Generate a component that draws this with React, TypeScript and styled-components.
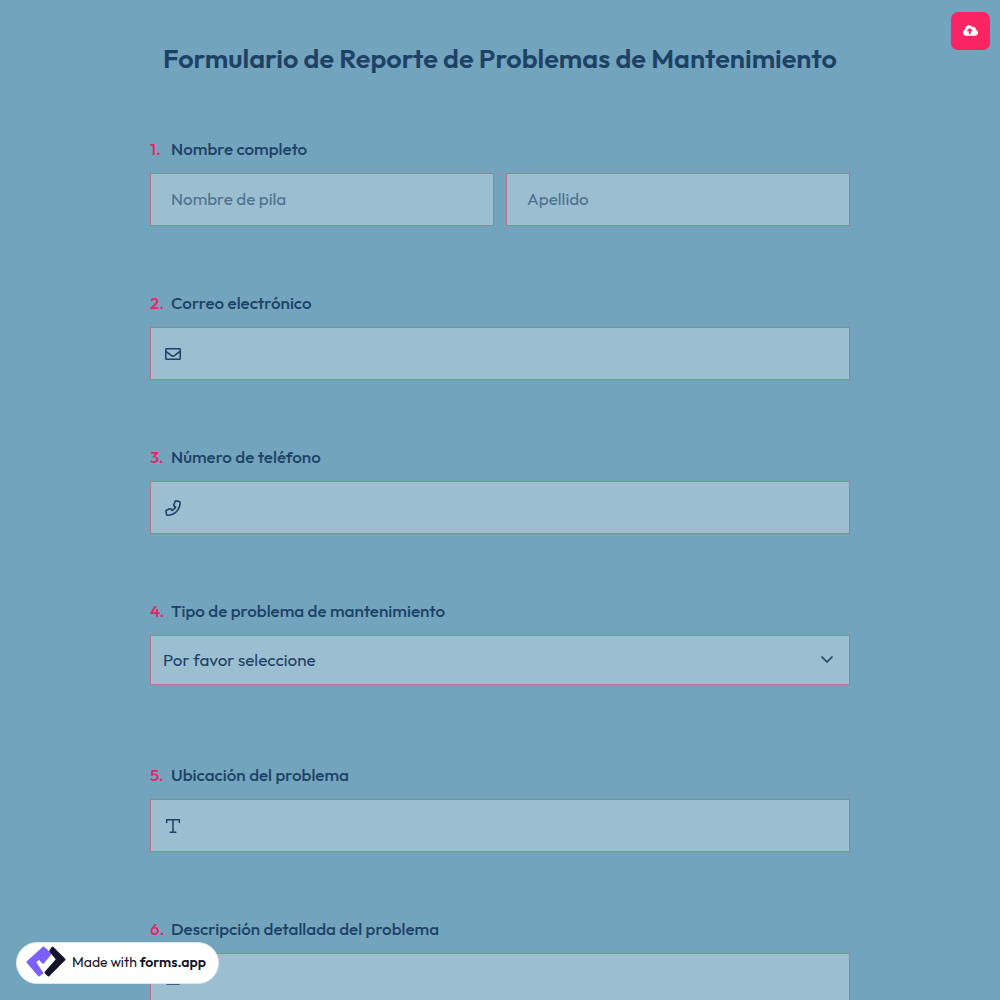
import React from 'react';
import styled, { createGlobalStyle } from 'styled-components';
import { FaCloudUploadAlt, FaRegEnvelope } from 'react-icons/fa';

const GlobalStyle = createGlobalStyle`
  *, *::before, *::after { box-sizing: border-box; }
  body {
    margin: 0;
    background: #72a4be;
    color: #1d4266;
    font-family: Outfit, Lato, sans-serif;
  }
`;

const Page = styled.div`
  height: 100vh;
  overflow-y: auto;
  scrollbar-width: none;
`;

const Form = styled.form`
  width: 70%;
  margin: 0 auto;
  padding: 40px 0;
`;

const Title = styled.h1`
  margin: 0 0 61px;
  font-size: 27px;
  font-weight: 600;
  line-height: 36px;
  text-align: center;
`;

const Question = styled.fieldset<{ $space?: number }>`
  min-width: 0;
  margin: 0 0 ${(p) => p.$space ?? 65}px;
  padding: 0;
  border: 0;
`;

const Label = styled.label`
  display: flex;
  margin-bottom: 12px;
  font-size: 17px;
  font-weight: 500;
  line-height: 24px;
`;

const Num = styled.span`
  width: 21px;
  color: #e82367;
  font-weight: 500;
`;

const Columns = styled.div`
  display: grid;
  grid-template-columns: 1fr 1fr;
  gap: 12px;
`;

const Box = styled.div<{ $height?: number }>`
  display: flex;
  align-items: center;
  height: ${(p) => p.$height ?? 53}px;
  border: 1px solid #c0708c;
  background: #9cbed1;
  svg { flex: none; }
`;

const Input = styled.input`
  flex: 1;
  min-width: 0;
  height: 100%;
  padding: 0 20px 2px;
  border: 0;
  outline: 0;
  background: transparent;
  color: inherit;
  font: 400 17px Outfit, Lato, sans-serif;
  &::placeholder { color: #4b7390; opacity: 1; }
`;

const Select = styled.select`
  flex: 1;
  height: 100%;
  padding: 0 12px 2px;
  border: 0;
  outline: 0;
  appearance: none;
  background: transparent;
  color: inherit;
  font: 400 17px Outfit, Lato, sans-serif;
`;

const AreaBox = styled(Box)`
  align-items: flex-start;
  height: 140px;
  padding-top: 16px;
`;

const TextArea = styled.textarea`
  flex: 1;
  height: 100%;
  padding: 0 20px;
  border: 0;
  outline: 0;
  resize: none;
  background: transparent;
  color: inherit;
  font: 400 17px Outfit, Lato, sans-serif;
`;

const Lead = styled.span`
  display: flex;
  margin-left: 14px;
`;

const Trail = styled.span`
  display: flex;
  margin-right: 15px;
`;

const SaveButton = styled.button`
  position: fixed;
  top: 12px;
  right: 10px;
  display: flex;
  align-items: center;
  justify-content: center;
  width: 39px;
  height: 38px;
  padding: 0 0 2px;
  border: 0;
  border-radius: 7px;
  background: #fb2464;
  color: #fff;
`;

const Badge = styled.a`
  position: fixed;
  left: 16px;
  bottom: 16px;
  display: flex;
  align-items: center;
  gap: 6px;
  width: 203px;
  height: 42px;
  padding: 0 0 2px 9px;
  border: 1px solid #dce5ec;
  border-radius: 21px;
  background: #fff;
  color: #14142b;
  font-size: 14px;
  line-height: 20px;
  text-decoration: none;
  white-space: nowrap;
  b { font-weight: 600; }
`;

const PhoneIcon = () => (
  <svg width="16" height="16" viewBox="0 0 16 16" fill="none" stroke="currentColor" strokeWidth="1.6" strokeLinejoin="round">
    <path d="M11.2.9 14.3 1.5Q15.2 1.7 15.2 2.6C15.2 9.6 9.6 15.2 2.6 15.2Q1.7 15.2 1.5 14.3L.9 11.3Q.8 10.5 1.5 10.2L4.7 8.8Q5.4 8.5 5.9 9.1L7 10.5Q9.3 9.2 10.5 7L9.1 5.9Q8.5 5.4 8.8 4.7L10.1 1.5Q10.4.8 11.2.9Z" />
  </svg>
);

const TextIcon = () => (
  <svg width="16" height="16" viewBox="0 0 16 16" fill="none" stroke="currentColor" strokeWidth="1.5" strokeLinecap="round">
    <path d="M1.7 4.6V1.7H14.3V4.6M8 1.7V14.3M5.2 14.3H10.8" />
  </svg>
);

const LinesIcon = () => (
  <svg width="16" height="16" viewBox="0 0 16 16" fill="none" stroke="currentColor" strokeWidth="1.5" strokeLinecap="round">
    <path d="M2 1.5H10M2 5.6H14M2 9.8H10M2 14H14" />
  </svg>
);

const ChevronIcon = () => (
  <svg width="14" height="14" viewBox="0 0 14 14" fill="none" stroke="currentColor" strokeWidth="1.7" strokeLinecap="round" strokeLinejoin="round">
    <path d="M2 4 7 9 12 4" />
  </svg>
);

const Logo = () => (
  <svg width="40" height="32" viewBox="0 0 40 32" strokeLinejoin="round" strokeWidth="2">
    <path d="M17.5 1.5 1.5 16 13 29.5 16.3 27 9 16 13 12.5 17 16.8 24.5 7.8Z" fill="#7b61fa" stroke="#7b61fa" />
    <path d="M26.5 1.5 38.5 13.5 22.5 29.5 19.5 26.5 31 13.5 24.2 5Z" fill="#14142b" stroke="#14142b" />
  </svg>
);

export default function App() {
  return (
    <>
      <GlobalStyle />
      <Page>
        <Form>
          <Title>Formulario de Reporte de Problemas de Mantenimiento</Title>
          <Question>
            <Label htmlFor="first-name"><Num>1.</Num>Nombre completo</Label>
            <Columns>
              <Box><Input id="first-name" placeholder="Nombre de pila" /></Box>
              <Box><Input aria-label="Apellido" placeholder="Apellido" /></Box>
            </Columns>
          </Question>
          <Question>
            <Label htmlFor="email"><Num>2.</Num>Correo electrónico</Label>
            <Box><Lead><FaRegEnvelope size={16} /></Lead><Input id="email" type="email" /></Box>
          </Question>
          <Question>
            <Label htmlFor="phone"><Num>3.</Num>Número de teléfono</Label>
            <Box><Lead><PhoneIcon /></Lead><Input id="phone" type="tel" /></Box>
          </Question>
          <Question $space={78}>
            <Label htmlFor="kind"><Num>4.</Num>Tipo de problema de mantenimiento</Label>
            <Box $height={50}>
              <Select id="kind"><option>Por favor seleccione</option></Select>
              <Trail><ChevronIcon /></Trail>
            </Box>
          </Question>
          <Question>
            <Label htmlFor="place"><Num>5.</Num>Ubicación del problema</Label>
            <Box><Lead><TextIcon /></Lead><Input id="place" /></Box>
          </Question>
          <Question>
            <Label htmlFor="details"><Num>6.</Num>Descripción detallada del problema</Label>
            <AreaBox><Lead><LinesIcon /></Lead><TextArea id="details" /></AreaBox>
          </Question>
        </Form>
      </Page>
      <SaveButton type="button" aria-label="Guardar"><FaCloudUploadAlt size={15} /></SaveButton>
      <Badge href="#"><Logo /><span>Made with <b>forms.app</b></span></Badge>
    </>
  );
}
